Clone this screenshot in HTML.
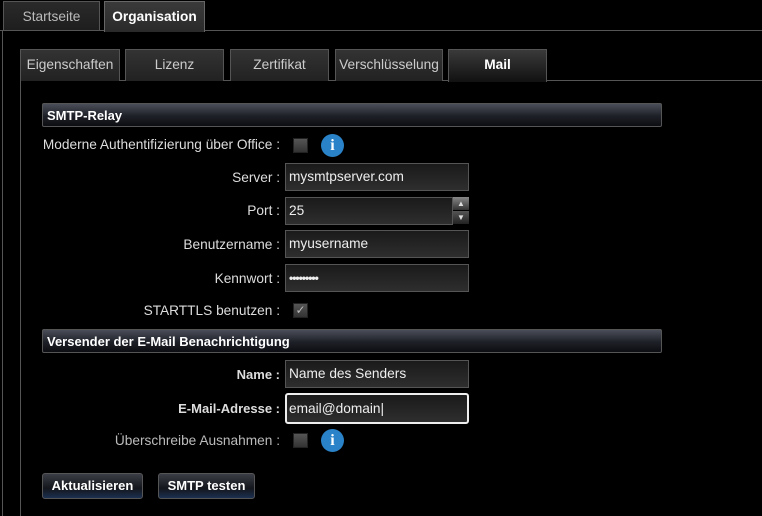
<!DOCTYPE html><html><head><style>
body{margin:0;width:762px;height:516px;background:#000;position:relative;overflow:hidden;font-family:"Liberation Sans",sans-serif;font-size:13.7px;color:#ddd}
.a{position:absolute}
.otab{position:absolute;top:1px;height:29px;border:1px solid #555;border-bottom:none;background:linear-gradient(#2a2a2a,#1e1e1e);color:#bbb;text-align:center;line-height:30px;box-sizing:border-box}
.itab{position:absolute;top:49px;height:32px;border:1px solid #555;border-bottom:none;background:linear-gradient(#333,#222);color:#ccc;text-align:center;line-height:30px;box-sizing:border-box}
.hdr{position:absolute;left:42px;width:620px;height:24px;border:1px solid #555;border-radius:2px;background:linear-gradient(#4a4e58,#1e2028 55%,#0c0d12);color:#fff;font-weight:bold;font-size:13px;line-height:24px;padding-left:4px;box-sizing:border-box}
.lbl{position:absolute;right:482px;text-align:right;white-space:nowrap}
.inp{position:absolute;left:285px;width:184px;height:28px;border:1px solid #555;background:linear-gradient(#1a1a1a,#2e2e2e);box-sizing:border-box;color:#eee;line-height:26px;padding-left:3px}
.cb{position:absolute;left:293px;width:15px;height:15px;background:linear-gradient(#555,#333);border:1px solid #222;box-sizing:border-box}
.info{position:absolute;left:321px;width:23px;height:23px;border-radius:50%;background:#2a83c8;color:#fff;font-weight:bold;font-family:"Liberation Serif",serif;font-size:16px;text-align:center;line-height:23px}
.btn{position:absolute;top:473px;height:26px;border:1px solid #555;border-radius:3px;background:linear-gradient(#3a3d45,#14161c 60%,#1b3050);color:#fff;font-weight:bold;font-size:13px;text-align:center;line-height:24px;box-sizing:border-box}
</style></head><body>
<div class="a" style="left:0;top:30px;width:762px;height:1px;background:#555"></div>
<div class="a" style="left:2px;top:30px;width:1px;height:486px;background:#555"></div>
<div class="otab" style="left:3px;width:97px">Startseite</div>
<div class="otab" style="left:104px;width:101px;height:31px;background:linear-gradient(#3a3a3a,#2a2a2a);color:#fff;font-weight:bold;border-color:#666">Organisation</div>
<div class="a" style="left:20px;top:80px;width:742px;height:1px;background:#555"></div>
<div class="a" style="left:20px;top:80px;width:1px;height:436px;background:#555"></div>
<div class="itab" style="left:20px;width:100px">Eigenschaften</div>
<div class="itab" style="left:125px;width:99px">Lizenz</div>
<div class="itab" style="left:230px;width:99px">Zertifikat</div>
<div class="itab" style="left:335px;width:108px">Verschlüsselung</div>
<div class="itab" style="left:448px;width:99px;height:33px;background:linear-gradient(#3a3a3a,#111);color:#fff;font-weight:bold">Mail</div>
<div class="hdr" style="top:103px">SMTP-Relay</div>
<div class="lbl" style="top:137px">Moderne Authentifizierung über Office :</div>
<div class="cb" style="top:138px"></div><div class="info" style="top:134px">i</div>
<div class="lbl" style="top:170px">Server :</div><div class="inp" style="top:163px">mysmtpserver.com</div>
<div class="lbl" style="top:203px">Port :</div><div class="inp" style="top:197px;width:168px">25</div>
<div class="a" style="left:453px;top:197px;width:16px;height:13px;background:linear-gradient(#888,#333);color:#ddd;font-size:8px;text-align:center;line-height:13px">▲</div>
<div class="a" style="left:453px;top:211px;width:16px;height:13px;background:linear-gradient(#555,#222);color:#ddd;font-size:8px;text-align:center;line-height:13px">▼</div>
<div class="lbl" style="top:237px">Benutzername :</div><div class="inp" style="top:230px">myusername</div>
<div class="lbl" style="top:271px">Kennwort :</div><div class="inp" style="top:264px;font-size:12px;font-weight:bold;letter-spacing:-1px">•••••••••</div>
<div class="lbl" style="top:303px">STARTTLS benutzen :</div>
<div class="cb" style="top:303px;color:#bbb;font-size:12px;line-height:13px;text-align:center">✓</div>
<div class="hdr" style="top:329px">Versender der E-Mail Benachrichtigung</div>
<div class="lbl" style="top:367px;font-weight:bold;font-size:13px">Name :</div><div class="inp" style="top:360px">Name des Senders</div>
<div class="lbl" style="top:401px;font-weight:bold;font-size:13px">E-Mail-Adresse :</div><div class="inp" style="top:393px;height:31px;border:2px solid #eee;border-radius:3px;line-height:27px;padding-left:2px">email@domain|</div>
<div class="lbl" style="top:433px;color:#bbb">Überschreibe Ausnahmen :</div>
<div class="cb" style="top:433px"></div><div class="info" style="top:429px">i</div>
<div class="btn" style="left:42px;width:101px">Aktualisieren</div>
<div class="btn" style="left:158px;width:97px">SMTP testen</div>
</body></html>
